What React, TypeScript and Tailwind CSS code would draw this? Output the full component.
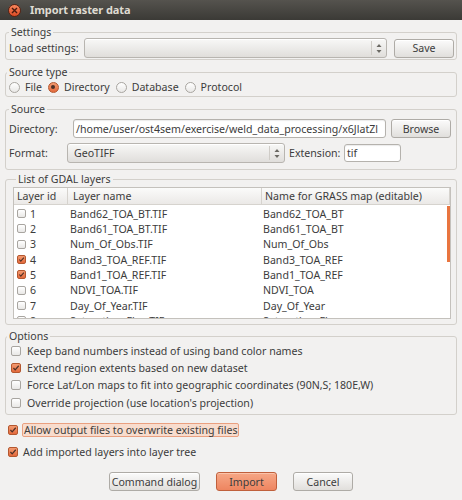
import React from 'react';

type Layer = { id: number; file: string; name: string; checked: boolean };

const layers: Layer[] = [
  { id: 1, file: 'Band62_TOA_BT.TIF', name: 'Band62_TOA_BT', checked: false },
  { id: 2, file: 'Band61_TOA_BT.TIF', name: 'Band61_TOA_BT', checked: false },
  { id: 3, file: 'Num_Of_Obs.TIF', name: 'Num_Of_Obs', checked: false },
  { id: 4, file: 'Band3_TOA_REF.TIF', name: 'Band3_TOA_REF', checked: true },
  { id: 5, file: 'Band1_TOA_REF.TIF', name: 'Band1_TOA_REF', checked: true },
  { id: 6, file: 'NDVI_TOA.TIF', name: 'NDVI_TOA', checked: false },
  { id: 7, file: 'Day_Of_Year.TIF', name: 'Day_Of_Year', checked: false },
  { id: 8, file: 'Saturation_Flag.TIF', name: 'Saturation_Flag', checked: false },
];

const options = [
  { label: 'Keep band numbers instead of using band color names', checked: false },
  { label: 'Extend region extents based on new dataset', checked: true },
  { label: 'Force Lat/Lon maps to fit into geographic coordinates (90N,S; 180E,W)', checked: false },
  { label: "Override projection (use location's projection)", checked: false },
];

function Checkbox({ checked = false, small = false }: { checked?: boolean; small?: boolean }) {
  return (
    <span
      className={`${small ? 'w-[9px] h-[9px]' : 'w-[10px] h-[10px]'} shrink-0 flex rounded-[2px] border ${
        checked
          ? 'border-[#b4572f] bg-linear-to-b from-[#f39a70] to-[#e3693b]'
          : 'border-[#a8a5a0] bg-linear-to-b from-white to-[#e9e8e6]'
      }`}
    >
      {checked && (
        <svg viewBox="0 0 10 10" className="w-full h-full">
          <path d="M1.8 5 L4 7.4 L8.4 2.2" fill="none" stroke="#4b3027" strokeWidth="1.5" />
        </svg>
      )}
    </span>
  );
}

function Radio({ checked = false }: { checked?: boolean }) {
  return (
    <span
      className={`w-[11px] h-[11px] shrink-0 rounded-full border flex items-center justify-center ${
        checked
          ? 'border-[#b4572f] bg-linear-to-b from-[#f39a70] to-[#e3693b]'
          : 'border-[#a8a5a0] bg-linear-to-b from-white to-[#e9e8e6]'
      }`}
    >
      {checked && <span className="w-[4px] h-[4px] rounded-full bg-[#4b3027]" />}
    </span>
  );
}

function Arrows() {
  return (
    <svg width="6" height="11" viewBox="0 0 6 11">
      <path d="M3 1 L5.5 4 L0.5 4 Z" fill="#6b6963" />
      <path d="M3 10 L5.5 7 L0.5 7 Z" fill="#6b6963" />
    </svg>
  );
}

function Combo({ value = '', className = '' }: { value?: string; className?: string }) {
  return (
    <div
      className={`h-[20px] flex items-center rounded-[3px] border border-[#b8b5b0] bg-linear-to-b from-[#f8f8f7] to-[#e0dedb] shadow-[inset_0_1px_0_#ffffff] ${className}`}
    >
      <span className="flex-1 pl-[6px] whitespace-nowrap overflow-hidden">{value}</span>
      <span className="w-px h-[14px] bg-[#cfccc7]" />
      <span className="w-[14px] flex items-center justify-center">
        <Arrows />
      </span>
    </div>
  );
}

function Button({ children, className = '', primary = false }: { children: React.ReactNode; className?: string; primary?: boolean }) {
  return (
    <button
      className={`h-[19px] flex items-center justify-center rounded-[3px] border ${
        primary
          ? 'border-[#c0603c] bg-linear-to-b from-[#f6a786] to-[#ee8560] shadow-[inset_0_1px_0_#fbc3aa]'
          : 'border-[#aeaba6] bg-linear-to-b from-[#fbfbfb] to-[#e1dfdc] shadow-[inset_0_1px_0_#ffffff]'
      } ${className}`}
    >
      {children}
    </button>
  );
}

function Group({ title, legendClass = 'ml-[3px]', className = '', children }: { title: string; legendClass?: string; className?: string; children: React.ReactNode }) {
  return (
    <fieldset className={`border border-[#d3d0cb] rounded-[3px] ${className}`}>
      <legend className={`leading-[12px] px-[2px] ${legendClass}`}>{title}</legend>
      {children}
    </fieldset>
  );
}

export default function App() {
  return (
    <div className="w-[462px] h-[500px] flex flex-col overflow-hidden bg-[#f2f1f0] text-[#3c3c3c] text-[10.6px] leading-[14px] font-['Noto_Sans','DejaVu_Sans',sans-serif]">
      {/* title bar */}
      <div className="h-[20px] shrink-0 flex items-center bg-linear-to-b from-[#55534e] to-[#3b3a36]">
        <span className="ml-[8px] w-[13px] h-[13px] rounded-full border border-[#5a2212] bg-linear-to-b from-[#f7865c] to-[#dc4a23] flex items-center justify-center">
          <svg width="7" height="7" viewBox="0 0 7 7">
            <path d="M1 1 L6 6 M6 1 L1 6" stroke="#4a1a0e" strokeWidth="1.4" />
          </svg>
        </span>
        <span className="ml-[9px] font-bold text-[11px] tracking-[-0.1px] text-[#dfdbd2]">Import raster data</span>
      </div>

      <div className="flex flex-col px-[5px]">
        <Group title="Settings" className="mt-[6px] pb-[1px]">
          <div className="h-[20px] flex items-center pl-[3px] pr-[2px]">
            <span className="w-[75px] shrink-0">Load settings:</span>
            <Combo className="flex-1" />
            <Button className="ml-[7px] w-[60px]">Save</Button>
          </div>
        </Group>

        <Group title="Source type" legendClass="ml-[1px]" className="mt-[6px]">
          <div className="h-[18px] flex items-center pl-[3px] gap-[6px]">
            {['File', 'Directory', 'Database', 'Protocol'].map((t) => (
              <span key={t} className="flex items-center gap-[5px]">
                <Radio checked={t === 'Directory'} />
                {t}
              </span>
            ))}
          </div>
        </Group>

        <Group title="Source" className="mt-[6px] pt-[4px] pb-[6px]">
          <div className="h-[19px] flex items-center pl-[3px] pr-[5px]">
            <span className="w-[64px] shrink-0">Directory:</span>
            <div className="h-[19px] flex-1 flex items-center rounded-[3px] border border-[#b5b2ad] bg-white shadow-[inset_0_1px_1px_rgba(0,0,0,0.08)] overflow-hidden whitespace-nowrap pl-[2px]">
              /home/user/ost4sem/exercise/weld_data_processing/x6JlatZl
            </div>
            <Button className="ml-[5px] w-[60px]">Browse</Button>
          </div>
          <div className="h-[20px] mt-[5px] flex items-center pl-[3px]">
            <span className="w-[58px] shrink-0">Format:</span>
            <Combo value="GeoTIFF" className="w-[218px]" />
            <span className="ml-[4px] w-[55px]">Extension:</span>
            <div className="h-[18px] w-[57px] flex items-center rounded-[3px] border border-[#b5b2ad] bg-white shadow-[inset_0_1px_1px_rgba(0,0,0,0.08)] pl-[2px]">
              tif
            </div>
          </div>
        </Group>

        <Group title="List of GDAL layers" className="mt-[3px] pt-[2px] pb-[5px] pl-[7px] pr-[5px]">
          <div className="border border-[#c4c1bc] bg-white">
            <div className="h-[17px] grid grid-cols-[53px_194px_1fr] items-center border-b border-[#d6d3ce] bg-linear-to-b from-[#fbfbfa] to-[#ebe9e7]">
              <span className="pl-[3px]">Layer id</span>
              <span className="h-full flex items-center pl-[5px] border-l border-[#d6d3ce]">Layer name</span>
              <span className="h-full flex items-center pl-[3px] border-l border-[#d6d3ce] border-r">Name for GRASS map (editable)</span>
            </div>
            <div className="relative h-[113px] overflow-hidden pt-[1px]">
              {layers.map((l) => (
                <div key={l.id} className="h-[15.33px] grid grid-cols-[53px_194px_1fr] items-center">
                  <span className="flex items-center pl-[3px] gap-[4px]">
                    <Checkbox checked={l.checked} small />
                    {l.id}
                  </span>
                  <span className="pl-[3px]">{l.file}</span>
                  <span className="pl-[2px]">{l.name}</span>
                </div>
              ))}
              <span className="absolute right-0 top-[1px] w-[3px] h-[56px] bg-[#e9753f]" />
            </div>
          </div>
        </Group>

        <Group title="Options" legendClass="ml-[1px]" className="mt-[5px] pb-[3px]">
          {options.map((o) => (
            <div key={o.label} className="h-[17.33px] flex items-center pl-[5px] gap-[6px] whitespace-nowrap overflow-hidden">
              <Checkbox checked={o.checked} />
              {o.label}
            </div>
          ))}
        </Group>

        <div className="mt-[6px] h-[17px] flex items-center pl-[3px] gap-[4px]">
          <Checkbox checked />
          <span className="h-[14px] flex items-center px-px rounded-[2px] border border-[#e9a080] bg-[#f8dccd]">
            Allow output files to overwrite existing files
          </span>
        </div>
        <div className="mt-[5px] h-[17px] flex items-center pl-[3px] gap-[5px]">
          <Checkbox checked />
          Add imported layers into layer tree
        </div>

        <div className="mt-[12px] flex justify-center gap-[16px]">
          <Button className="w-[91px]">Command dialog</Button>
          <Button primary className="w-[61px]">Import</Button>
          <Button className="w-[60px]">Cancel</Button>
        </div>
      </div>
    </div>
  );
}
